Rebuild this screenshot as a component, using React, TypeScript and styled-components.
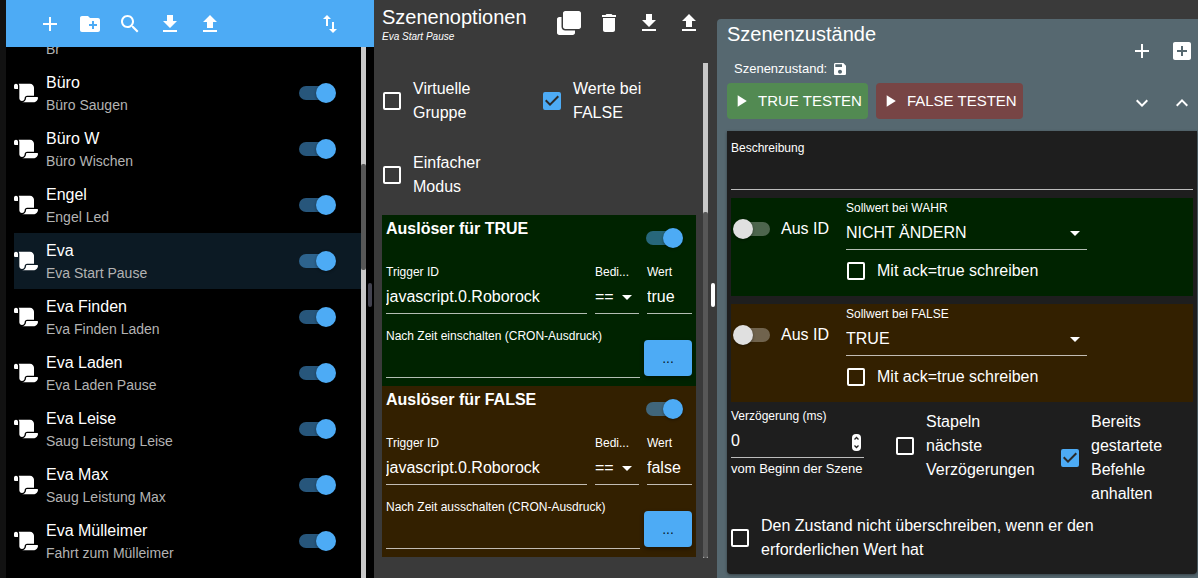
import React, { ReactNode, useId } from 'react';
import styled, { createGlobalStyle } from 'styled-components';
import { FaClone } from 'react-icons/fa';
import { FaScroll } from 'react-icons/fa6';

const blue = '#4dabf5';

const GlobalStyle = createGlobalStyle`
  *, *::before, *::after { box-sizing: border-box; }
  body {
    margin: 0;
    background: #121212;
    color: #fff;
    font: 16px/24px "Liberation Sans", Arial, Helvetica, sans-serif;
  }
  button, input, select { font: inherit; color: inherit; }
`;

const paths = {
  add: 'M19 13h-6v6h-2v-6H5v-2h6V5h2v6h6v2z',
  folder:
    'M20 6h-8l-2-2H4c-1.11 0-1.99.89-1.99 2L2 18c0 1.11.89 2 2 2h16c1.11 0 2-.89 2-2V8c0-1.11-.89-2-2-2zm-1 8h-3v3h-2v-3h-3v-2h3V9h2v3h3v2z',
  search:
    'M15.5 14h-.79l-.28-.27C15.41 12.59 16 11.11 16 9.5 16 5.91 13.09 3 9.5 3S3 5.91 3 9.5 5.91 16 9.5 16c1.61 0 3.09-.59 4.23-1.57l.27.28v.79l5 4.99L20.49 19l-4.99-5zm-6 0C7.01 14 5 11.99 5 9.5S7.01 5 9.5 5 14 7.01 14 9.5 11.99 14 9.5 14z',
  download: 'M19 9h-4V3H9v6H5l7 7 7-7zM5 18v2h14v-2H5z',
  upload: 'M9 16h6v-6h4l-7-7-7 7h4zm-4 2h14v2H5z',
  sort: 'M9 3L5 6.99h3V14h2V6.99h3L9 3zm7 14.01V10h-2v7.01h-3L15 21l4-3.99h-3z',
  trash: 'M6 19c0 1.1.9 2 2 2h8c1.1 0 2-.9 2-2V7H6v12zM19 4h-3.5l-1-1h-5l-1 1H5v2h14V4z',
  addBox:
    'M19 3H5c-1.11 0-2 .9-2 2v14c0 1.1.89 2 2 2h14c1.1 0 2-.9 2-2V5c0-1.1-.9-2-2-2zm-2 10h-4v4h-2v-4H7v-2h4V7h2v4h4v2z',
  save:
    'M17 3H5c-1.11 0-2 .9-2 2v14c0 1.1.89 2 2 2h14c1.1 0 2-.9 2-2V7l-4-4zm-5 16c-1.66 0-3-1.34-3-3s1.34-3 3-3 3 1.34 3 3-1.34 3-3 3zm3-10H5V5h10v4z',
  play: 'M8 5v14l11-7z',
  down: 'M7.41 8.59L12 13.17l4.59-4.58L18 10l-6 6-6-6 1.41-1.41z',
  up: 'M12 8l-6 6 1.41 1.41L12 10.83l4.59 4.58L18 14z',
  arrow: 'M7 10l5 5 5-5z',
};

function Icon({ name, size = 24 }: { name: keyof typeof paths; size?: number }) {
  return (
    <svg width={size} height={size} viewBox="0 0 24 24" fill="currentColor" aria-hidden="true">
      <path d={paths[name]} />
    </svg>
  );
}

const Layout = styled.div`
  display: grid;
  grid-template-columns: minmax(0, 368fr) minmax(0, 343fr) minmax(0, 481fr);
  height: 100vh;
  padding-left: 6px;
  overflow: hidden;
`;

const Pane = styled.section<{ $bg: string }>`
  position: relative;
  display: flex;
  flex-direction: column;
  min-height: 0;
  background: ${(p) => p.$bg};
`;

const Handle = styled.div<{ $color: string }>`
  position: absolute;
  top: 49%;
  right: 2px;
  width: 4px;
  height: 24px;
  border-radius: 2px;
  background: ${(p) => p.$color};
`;

const Toolbar = styled.header`
  display: flex;
  align-items: center;
  height: 47px;
  padding: 0 24px;
  background: ${blue};
`;

const IconButton = styled.button<{ $small?: boolean }>`
  display: grid;
  place-items: center;
  flex: none;
  width: ${(p) => (p.$small ? 32 : 40)}px;
  height: ${(p) => (p.$small ? 32 : 40)}px;
  padding: 0;
  border: 0;
  border-radius: 50%;
  background: none;
  cursor: pointer;
`;

const Spacer = styled.div`
  flex: 1;
`;

const ScrollRow = styled.div<{ $right: number; $bottom: number }>`
  display: flex;
  flex: 1;
  min-height: 0;
  padding: 0 ${(p) => p.$right}px ${(p) => p.$bottom}px 8px;
`;

const ScrollArea = styled.div`
  flex: 1;
  min-width: 0;
  overflow-y: auto;
  scrollbar-width: none;
`;

const Track = styled.div`
  position: relative;
  width: 5px;
  background: #c8c8c8;
`;

const Thumb = styled.div<{ $top: number; $size: number }>`
  position: absolute;
  top: ${(p) => p.$top}%;
  width: 5px;
  height: ${(p) => p.$size}%;
  border-radius: 2px;
  background: #575757;
`;

const SceneList = styled.ul`
  margin: -38px 0 0;
  padding: 0;
  list-style: none;
`;

const SceneItem = styled.li<{ $selected: boolean }>`
  display: flex;
  align-items: center;
  gap: 8px;
  height: 56px;
  padding-right: 25px;
  background: ${(p) => (p.$selected ? '#0c1a24' : 'transparent')};
`;

const SceneText = styled.div`
  flex: 1;
  min-width: 0;
`;

const SceneName = styled.div`
  height: 24px;
  line-height: 24px;
`;

const SceneInfo = styled.div`
  color: #b3b3b3;
  font-size: 14px;
  line-height: 20px;
`;

const SwitchInput = styled.input`
  appearance: none;
  position: relative;
  flex: none;
  width: 37px;
  height: 20px;
  margin: 0;
  cursor: pointer;
  &::before {
    content: '';
    position: absolute;
    top: 3px;
    left: 3px;
    width: 34px;
    height: 14px;
    border-radius: 7px;
    background: #fff;
    opacity: 0.3;
  }
  &::after {
    content: '';
    position: absolute;
    top: 0;
    left: 0;
    width: 20px;
    height: 20px;
    border-radius: 50%;
    background: #e0e0e0;
    box-shadow: 0 1px 3px rgba(0, 0, 0, 0.4);
  }
  &:checked::before {
    left: 0;
    background: ${blue};
    opacity: 0.5;
  }
  &:checked::after {
    left: 17px;
    background: ${blue};
  }
`;

const CheckLabel = styled.label<{ $endSpace?: number }>`
  display: flex;
  align-items: center;
  gap: 12px;
  padding-right: ${(p) => p.$endSpace ?? 0}px;
`;

const CheckBox = styled.span`
  display: grid;
  flex: none;
  width: 18px;
  height: 18px;
  > * {
    grid-area: 1 / 1;
  }
  > svg {
    pointer-events: none;
  }
`;

const CheckInput = styled.input`
  appearance: none;
  width: 18px;
  height: 18px;
  margin: 0;
  border: 2px solid #fff;
  border-radius: 2px;
  cursor: pointer;
  &:checked {
    border-color: ${blue};
    background: ${blue};
  }
`;

function Check({ text, checked, endSpace }: { text: string; checked?: boolean; endSpace?: number }) {
  return (
    <CheckLabel $endSpace={endSpace}>
      <CheckBox>
        <CheckInput type="checkbox" defaultChecked={checked} />
        {checked && (
          <svg width="18" height="18" viewBox="3 3 18 18" fill="#2b2b2b" aria-hidden="true">
            <path d="M10 17l-5-5 1.41-1.41L10 14.17l7.59-7.59L19 8l-9 9z" />
          </svg>
        )}
      </CheckBox>
      <span>{text}</span>
    </CheckLabel>
  );
}

const OptionsHeader = styled.header`
  display: flex;
  align-items: flex-start;
  height: 63px;
  padding: 3px 8px 0;
`;

const TitleBlock = styled.div`
  flex: 1;
  min-width: 0;
`;

const Title = styled.h2`
  margin: 0;
  font-size: 20px;
  font-weight: 400;
  line-height: 28px;
`;

const Subtitle = styled.div`
  font-size: 10px;
  font-style: italic;
  line-height: 12px;
`;

const OptionGrid = styled.div`
  display: grid;
  grid-template-columns: 1fr 1fr;
  gap: 26px 0;
  padding: 14px 0 16px 1px;
`;

const Trigger = styled.section<{ $bg: string }>`
  margin-right: 7px;
  padding: 4px 4px 8px;
  background: ${(p) => p.$bg};
`;

const TriggerHead = styled.div`
  display: flex;
  align-items: center;
  justify-content: space-between;
  height: 38px;
  margin-bottom: 7px;
  padding-right: 9px;
`;

const TriggerTitle = styled.h3`
  align-self: flex-start;
  margin: 0;
  font-size: 16px;
  line-height: 20px;
`;

const TriggerFields = styled.div`
  display: grid;
  grid-template-columns: minmax(0, 1fr) 44px 45px;
  gap: 8px;
  margin-bottom: 14px;
`;

const CronRow = styled.div`
  display: flex;
  align-items: flex-end;
  gap: 4px;
`;

const FieldBox = styled.div`
  flex: 1;
  min-width: 0;
`;

const FieldLabel = styled.label`
  display: block;
  font-size: 12px;
  line-height: 16px;
  white-space: nowrap;
`;

const Control = styled.div`
  position: relative;
  height: 34px;
  border-bottom: 1px solid rgba(255, 255, 255, 0.7);
  > svg {
    position: absolute;
    top: 5px;
    right: 0;
    pointer-events: none;
  }
`;

const fieldInput = `
  appearance: none;
  display: block;
  width: 100%;
  height: 33px;
  padding: 1px 0 0;
  border: 0;
  border-radius: 0;
  outline: 0;
  background: transparent;
`;

const TextInput = styled.input`
  ${fieldInput}
  &[type='number'] {
    appearance: textfield;
  }
`;

const SelectInput = styled.select`
  ${fieldInput}
  option {
    background: #424242;
  }
`;

function TextField({ label, value = '' }: { label: string; value?: string }) {
  const id = useId();
  return (
    <FieldBox>
      <FieldLabel htmlFor={id}>{label}</FieldLabel>
      <Control>
        <TextInput id={id} type="text" defaultValue={value} />
      </Control>
    </FieldBox>
  );
}

function SelectField({ label, value }: { label: string; value: string }) {
  const id = useId();
  return (
    <FieldBox>
      <FieldLabel htmlFor={id}>{label}</FieldLabel>
      <Control>
        <SelectInput id={id} defaultValue={value}>
          <option>{value}</option>
        </SelectInput>
        <Icon name="arrow" />
      </Control>
    </FieldBox>
  );
}

const DotsButton = styled.button`
  width: 48px;
  height: 36px;
  margin-bottom: 2px;
  padding: 0;
  border: 0;
  border-radius: 4px;
  background: ${blue};
  box-shadow: 0 2px 4px rgba(0, 0, 0, 0.4);
  color: rgba(0, 0, 0, 0.87);
  font-size: 14px;
  cursor: pointer;
`;

function TriggerPanel(props: { bg: string; title: string; value: string; cron: string }) {
  return (
    <Trigger $bg={props.bg}>
      <TriggerHead>
        <TriggerTitle>{props.title}</TriggerTitle>
        <SwitchInput type="checkbox" role="switch" aria-label={props.title} defaultChecked />
      </TriggerHead>
      <TriggerFields>
        <TextField label="Trigger ID" value="javascript.0.Roborock" />
        <SelectField label="Bedi..." value="==" />
        <TextField label="Wert" value={props.value} />
      </TriggerFields>
      <CronRow>
        <TextField label={props.cron} />
        <DotsButton type="button">...</DotsButton>
      </CronRow>
    </Trigger>
  );
}

const StatesPanel = styled.div`
  flex: 1;
  min-height: 0;
  margin-top: 19px;
  padding: 1px 1px 4px 10px;
  border-top-left-radius: 4px;
  background: #566870;
`;

const StatesHead = styled.header`
  display: flex;
  justify-content: space-between;
  margin-right: -1px;
`;

const ButtonPair = styled.div`
  display: flex;
  gap: 8px;
`;

const SideColumn = styled.div`
  display: flex;
  flex-direction: column;
  gap: 20px;
  padding-top: 15px;
`;

const StateLine = styled.div`
  display: flex;
  align-items: center;
  gap: 5px;
  margin: 11px 0 4px;
  padding-left: 7px;
  font-size: 13px;
  line-height: 20px;
`;

const TestButton = styled.button<{ $bg: string }>`
  display: flex;
  align-items: center;
  gap: 7px;
  height: 36px;
  padding: 0 6px 0 4px;
  border: 0;
  border-radius: 4px;
  background: ${(p) => p.$bg};
  font-size: 15px;
  cursor: pointer;
`;

const Card = styled.div`
  margin-top: 12px;
  padding: 9px 4px 12px;
  border-radius: 0 0 4px 4px;
  background: #1e1e1e;
  box-shadow: 0 1px 3px rgba(0, 0, 0, 0.4);
`;

const Target = styled.div<{ $bg: string }>`
  display: grid;
  grid-template-columns: 113px minmax(0, 241px);
  height: 98px;
  margin-top: 8px;
  padding: 2px;
  background: ${(p) => p.$bg};
`;

const SwitchLabel = styled.label`
  display: flex;
  align-items: center;
  gap: 11px;
  height: 58px;
`;

const TargetFields = styled.div`
  display: flex;
  flex-direction: column;
  gap: 9px;
  > div {
    flex: none;
  }
  > label {
    padding-left: 1px;
  }
`;

function TargetPanel({ bg, label, value }: { bg: string; label: string; value: string }) {
  return (
    <Target $bg={bg}>
      <SwitchLabel>
        <SwitchInput type="checkbox" role="switch" />
        Aus ID
      </SwitchLabel>
      <TargetFields>
        <SelectField label={label} value={value} />
        <Check text="Mit ack=true schreiben" />
      </TargetFields>
    </Target>
  );
}

const DelayGrid = styled.div`
  display: grid;
  grid-template-columns: 165fr 165fr 132fr;
  align-items: start;
  padding-top: 8px;
  margin-bottom: 8px;
`;

const DelayField = styled.div`
  margin-top: -2px;
  padding-right: 32px;
`;

const Helper = styled.div`
  margin-top: 3px;
  font-size: 13px;
  line-height: 16px;
  white-space: nowrap;
`;

function Delay(): ReactNode {
  const id = useId();
  return (
    <DelayField>
      <FieldLabel htmlFor={id}>Verzögerung (ms)</FieldLabel>
      <Control>
        <TextInput id={id} type="number" defaultValue={0} />
        <svg width="15" height="24" viewBox="0 0 15 24" aria-hidden="true">
          <rect x="3" y="5" width="9" height="17" rx="4" fill="#fff" />
          <path d="M5.5 10.5l2-2 2 2M5.5 16.500l2 2 2-2" fill="none" stroke="#222" strokeWidth="1.3" />
        </svg>
      </Control>
      <Helper>vom Beginn der Szene</Helper>
    </DelayField>
  );
}

const scenes = [
  ['', 'Br'],
  ['Büro', 'Büro Saugen'],
  ['Büro W', 'Büro Wischen'],
  ['Engel', 'Engel Led'],
  ['Eva', 'Eva Start Pause'],
  ['Eva Finden', 'Eva Finden Laden'],
  ['Eva Laden', 'Eva Laden Pause'],
  ['Eva Leise', 'Saug Leistung Leise'],
  ['Eva Max', 'Saug Leistung Max'],
  ['Eva Mülleimer', 'Fahrt zum Mülleimer'],
];

export default function App() {
  return (
    <Layout>
      <GlobalStyle />
      <Pane $bg="#000">
        <Toolbar>
          <IconButton aria-label="Neue Szene"><Icon name="add" /></IconButton>
          <IconButton aria-label="Neuer Ordner"><Icon name="folder" /></IconButton>
          <IconButton aria-label="Suchen"><Icon name="search" /></IconButton>
          <IconButton aria-label="Exportieren"><Icon name="download" /></IconButton>
          <IconButton aria-label="Importieren"><Icon name="upload" /></IconButton>
          <Spacer />
          <IconButton aria-label="Sortieren"><Icon name="sort" /></IconButton>
        </Toolbar>
        <ScrollRow $right={8} $bottom={0}>
          <ScrollArea>
            <SceneList>
              {scenes.map(([name, info]) => (
                <SceneItem key={info} $selected={name === 'Eva'}>
                  <FaScroll size={24} />
                  <SceneText>
                    <SceneName>{name}</SceneName>
                    <SceneInfo>{info}</SceneInfo>
                  </SceneText>
                  <SwitchInput type="checkbox" role="switch" aria-label={info} defaultChecked />
                </SceneItem>
              ))}
            </SceneList>
          </ScrollArea>
          <Track><Thumb $top={22} $size={20} /></Track>
        </ScrollRow>
        <Handle $color="#42424f" />
      </Pane>

      <Pane $bg="#3a3a3a">
        <OptionsHeader>
          <TitleBlock>
            <Title>Szenenoptionen</Title>
            <Subtitle>Eva Start Pause</Subtitle>
          </TitleBlock>
          <IconButton aria-label="Duplizieren"><FaClone size={24} /></IconButton>
          <IconButton aria-label="Löschen"><Icon name="trash" /></IconButton>
          <IconButton aria-label="Exportieren"><Icon name="download" /></IconButton>
          <IconButton aria-label="Importieren"><Icon name="upload" /></IconButton>
        </OptionsHeader>
        <ScrollRow $right={9} $bottom={20}>
          <ScrollArea>
            <OptionGrid>
              <Check text="Virtuelle Gruppe" endSpace={32} />
              <Check text="Werte bei FALSE" endSpace={32} checked />
              <Check text="Einfacher Modus" endSpace={32} />
            </OptionGrid>
            <TriggerPanel
              bg="#002300"
              title="Auslöser für TRUE"
              value="true"
              cron="Nach Zeit einschalten (CRON-Ausdruck)"
            />
            <TriggerPanel
              bg="#332000"
              title="Auslöser für FALSE"
              value="false"
              cron="Nach Zeit ausschalten (CRON-Ausdruck)"
            />
          </ScrollArea>
          <Track><Thumb $top={30} $size={70} /></Track>
        </ScrollRow>
        <Handle $color="#fff" />
      </Pane>

      <Pane $bg="#3a3a3a">
        <StatesPanel>
          <StatesHead>
            <div>
              <Title>Szenenzustände</Title>
              <StateLine>
                Szenenzustand: <Icon name="save" size={16} />
              </StateLine>
              <ButtonPair>
                <TestButton $bg="#528a52"><Icon name="play" size={20} />TRUE TESTEN</TestButton>
                <TestButton $bg="#774545"><Icon name="play" size={20} />FALSE TESTEN</TestButton>
              </ButtonPair>
            </div>
            <SideColumn>
              <ButtonPair>
                <IconButton $small aria-label="Zustand hinzufügen"><Icon name="add" /></IconButton>
                <IconButton $small aria-label="Mehrere hinzufügen"><Icon name="addBox" /></IconButton>
              </ButtonPair>
              <ButtonPair>
                <IconButton $small aria-label="Alle aufklappen"><Icon name="down" /></IconButton>
                <IconButton $small aria-label="Alle zuklappen"><Icon name="up" /></IconButton>
              </ButtonPair>
            </SideColumn>
          </StatesHead>
          <Card>
            <TextField label="Beschreibung" />
            <TargetPanel bg="#002300" label="Sollwert bei WAHR" value="NICHT ÄNDERN" />
            <TargetPanel bg="#332000" label="Sollwert bei FALSE" value="TRUE" />
            <DelayGrid>
              <Delay />
              <Check text="Stapeln nächste Verzögerungen" endSpace={24} />
              <Check text="Bereits gestartete Befehle anhalten" checked />
            </DelayGrid>
            <Check text="Den Zustand nicht überschreiben, wenn er den erforderlichen Wert hat" endSpace={24} />
          </Card>
        </StatesPanel>
      </Pane>
    </Layout>
  );
}
